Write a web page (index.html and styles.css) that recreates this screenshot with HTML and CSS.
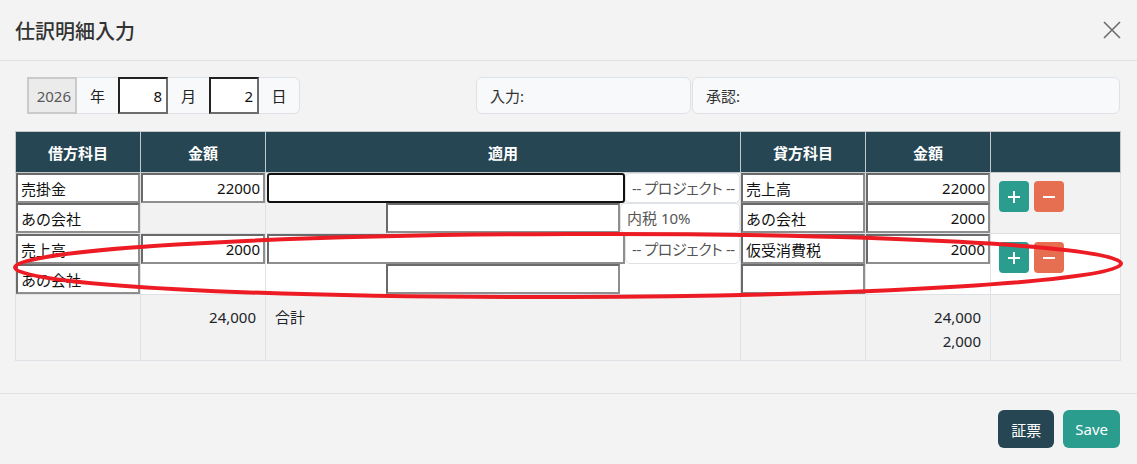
FILE: index.html
```html
<!DOCTYPE html>
<html lang="ja">
<head>
  <meta charset="UTF-8">
  <title>仕訳明細入力</title>
  <link rel="stylesheet" href="styles.css">
</head>
<body>

  <div class="modal">
    <!-- ヘッダー -->
    <div class="modal-header">
      <h5 class="modal-title">仕訳明細入力</h5>
      <button class="btn-close" aria-label="close">
        <svg width="18" height="18" viewBox="0 0 18 18">
          <path d="M1 1 L17 17 M17 1 L1 17" stroke="#6b6b6b" stroke-width="1.6" fill="none"/>
        </svg>
      </button>
    </div>

    <div class="modal-body">
      <!-- 日付・入力者・承認者 -->
      <div class="meta-row">
        <div class="date-group">
          <input class="date-year" value="2026" disabled>
          <span class="addon">年</span>
          <input class="date-num" value="8">
          <span class="addon">月</span>
          <input class="date-num" value="2">
          <span class="addon last">日</span>
        </div>
        <div class="sign-box">入力:</div>
        <div class="sign-box">承認:</div>
      </div>

      <table class="journal">
        <colgroup>
          <col style="width:125px">
          <col style="width:125px">
          <col style="width:475px">
          <col style="width:125px">
          <col style="width:125px">
          <col style="width:130px">
        </colgroup>
        <thead>
          <tr>
            <th>借方科目</th>
            <th>金額</th>
            <th>適用</th>
            <th>貸方科目</th>
            <th>金額</th>
            <th></th>
          </tr>
        </thead>
        <tbody>
          <!-- 1行目 -->
          <tr class="odd">
            <td>
              <input class="cell-input" value="売掛金">
              <input class="cell-input" value="あの会社">
            </td>
            <td>
              <input class="cell-input num" value="22000">
            </td>
            <td>
              <div class="line">
                <input class="cell-input memo focus">
                <select class="pick"><option>-- プロジェクト --</option></select>
              </div>
              <div class="line">
                <div class="spacer"></div>
                <input class="cell-input sub-memo">
                <select class="pick tax"><option>内税 10%</option></select>
              </div>
            </td>
            <td>
              <input class="cell-input" value="売上高">
              <input class="cell-input" value="あの会社">
            </td>
            <td>
              <input class="cell-input num" value="22000">
              <input class="cell-input num" value="2000">
            </td>
            <td class="actions">
              <button class="btn-add"><svg width="14" height="14" viewBox="0 0 14 14"><path d="M7 1 V13 M1 7 H13" stroke="#fff" stroke-width="2"/></svg></button>
              <button class="btn-del"><svg width="14" height="14" viewBox="0 0 14 14"><path d="M1 7 H13" stroke="#fff" stroke-width="2"/></svg></button>
            </td>
          </tr>
          <!-- 2行目 -->
          <tr>
            <td>
              <input class="cell-input" value="売上高">
              <input class="cell-input" value="あの会社">
            </td>
            <td>
              <input class="cell-input num" value="2000">
            </td>
            <td>
              <div class="line">
                <input class="cell-input memo">
                <select class="pick"><option>-- プロジェクト --</option></select>
              </div>
              <div class="line">
                <div class="spacer"></div>
                <input class="cell-input sub-memo">
                <div class="pick-empty"></div>
              </div>
            </td>
            <td>
              <input class="cell-input" value="仮受消費税">
              <input class="cell-input">
            </td>
            <td>
              <input class="cell-input num" value="2000">
            </td>
            <td class="actions">
              <button class="btn-add"><svg width="14" height="14" viewBox="0 0 14 14"><path d="M7 1 V13 M1 7 H13" stroke="#fff" stroke-width="2"/></svg></button>
              <button class="btn-del"><svg width="14" height="14" viewBox="0 0 14 14"><path d="M1 7 H13" stroke="#fff" stroke-width="2"/></svg></button>
            </td>
          </tr>
          <!-- 合計 -->
          <tr class="odd total">
            <td></td>
            <td class="num-cell">24,000</td>
            <td>合計</td>
            <td></td>
            <td class="num-cell">24,000<br>2,000</td>
            <td></td>
          </tr>
        </tbody>
      </table>
    </div>

    <div class="modal-footer">
      <button class="btn-voucher">証票</button>
      <button class="btn-save">Save</button>
    </div>
  </div>

  <!-- 赤丸の書き込み -->
  <svg class="mark" width="1137" height="464" viewBox="0 0 1137 464">
    <ellipse cx="568" cy="265.5" rx="553" ry="31.5" fill="none" stroke="#ed1c24" stroke-width="4" transform="rotate(-0.2 568 265)"/>
  </svg>

</body>
</html>
```

FILE: styles.css
```css
body {
  margin: 0;
  width: 1137px;
  height: 464px;
  overflow: hidden;
  position: relative;
  background: #f3f3f3;
  color: #212529;
  font-family: "Noto Sans", "Noto Sans CJK JP", sans-serif;
  font-size: 15px;
}
.modal-header {
  display: flex;
  align-items: center;
  justify-content: space-between;
  height: 61px;
  box-sizing: border-box;
  padding: 0 16px 0 15px;
  border-bottom: 1px solid #dee2e6;
}
.modal-title {
  margin: 0;
  font-size: 20px;
  font-weight: 500;
  color: #333;
}
.btn-close {
  background: none;
  border: 0;
  padding: 0;
  width: 18px;
  height: 18px;
  display: flex;
}
.modal-body {
  padding: 16px 17px 32px 15px;
}
.meta-row {
  display: grid;
  grid-template-columns: 460px 215px 1fr;
  column-gap: 1px;
  height: 37px;
  margin-bottom: 17px;
}
.date-group {
  display: flex;
  padding-left: 12px;
}
.date-group input {
  width: 50px;
  height: 37px;
  box-sizing: border-box;
  margin: 0;
  font: inherit;
  text-align: right;
  padding: 0 4px;
}
.date-year {
  background: #ebebeb;
  border: 2px solid #cacaca;
  color: #595959;
}
.date-num {
  background: #fff;
  border: 2px solid;
  border-color: #222 #6d6d6d #6d6d6d #222;
  color: #111;
}
.addon {
  width: 41px;
  display: flex;
  align-items: center;
  justify-content: center;
  background: #f8f9fa;
  border-top: 1px solid #dee2e6;
  border-bottom: 1px solid #dee2e6;
  box-sizing: border-box;
  color: #222;
}
.addon.last {
  border-right: 1px solid #dee2e6;
  border-radius: 0 6px 6px 0;
}
.sign-box {
  display: flex;
  align-items: center;
  padding-left: 13px;
  background: #f8f9fa;
  border: 1px solid #dee2e6;
  border-radius: 6px;
  color: #333;
}

/* 仕訳テーブル */
.journal {
  width: 1105px;
  table-layout: fixed;
  border-collapse: collapse;
  background: #fff;
}
.journal th {
  height: 40px;
  padding: 0;
  background: #264653;
  color: #fff;
  font-weight: bold;
  border: 1px solid #c4c8cc;
}
.journal td {
  padding: 0;
  height: 60px;
  vertical-align: top;
  border: 1px solid #dee2e6;
}
.journal tr.odd td {
  background: #f2f2f2;
}
.cell-input {
  display: block;
  width: 100%;
  height: 30px;
  box-sizing: border-box;
  margin: 0;
  padding: 0 3px;
  background: #fff;
  border: 2px solid;
  border-color: #6a6a6a #8e8e8e #8e8e8e #6a6a6a;
  font: inherit;
  color: #111;
}
.cell-input.num {
  text-align: right;
}
.cell-input.focus {
  border: 2px solid #111;
  border-radius: 3px;
}
.line {
  display: flex;
  height: 30px;
}
.memo {
  flex: 1;
  margin-left: 1px;
}
.spacer {
  width: 120px;
}
.sub-memo {
  flex: 1;
}
.pick {
  width: 115px;
  height: 30px;
  margin: 0;
  padding: 0 0 0 6px;
  appearance: none;
  background: #fff;
  border: 1px solid #dee2e6;
  border-radius: 5px;
  font: inherit;
  font-feature-settings: "palt";
  letter-spacing: -0.4px;
  color: #555;
}
.pick.tax {
  width: 120px;
  letter-spacing: 0;
}
.pick-empty {
  width: 120px;
}
.journal td.actions {
  height: 52px;
  padding: 8px 0 0 8px;
}
.actions button {
  width: 30px;
  height: 31px;
  border: 0;
  border-radius: 4px;
  padding: 0;
  margin-right: 1px;
  display: inline-flex;
  align-items: center;
  justify-content: center;
  vertical-align: top;
}
.btn-add {
  background: #2a9d8f;
}
.btn-del {
  background: #e76f51;
}
.journal tr.total td {
  height: auto;
  padding: 10px 9px 7px;
  line-height: 24px;
}
.journal tr.total td.num-cell {
  text-align: right;
}

.modal-footer {
  display: flex;
  justify-content: flex-end;
  gap: 9px;
  padding: 16px 17px 0;
  border-top: 1px solid #dee2e6;
}
.modal-footer button {
  height: 38px;
  border: 0;
  border-radius: 6px;
  padding: 0 13px;
  color: #fff;
  font: inherit;
}
.btn-voucher {
  background: #264653;
}
.btn-save {
  background: #2a9d8f;
  padding: 0 12px !important;
}

.mark {
  position: absolute;
  top: 0;
  left: 0;
  pointer-events: none;
}
```
